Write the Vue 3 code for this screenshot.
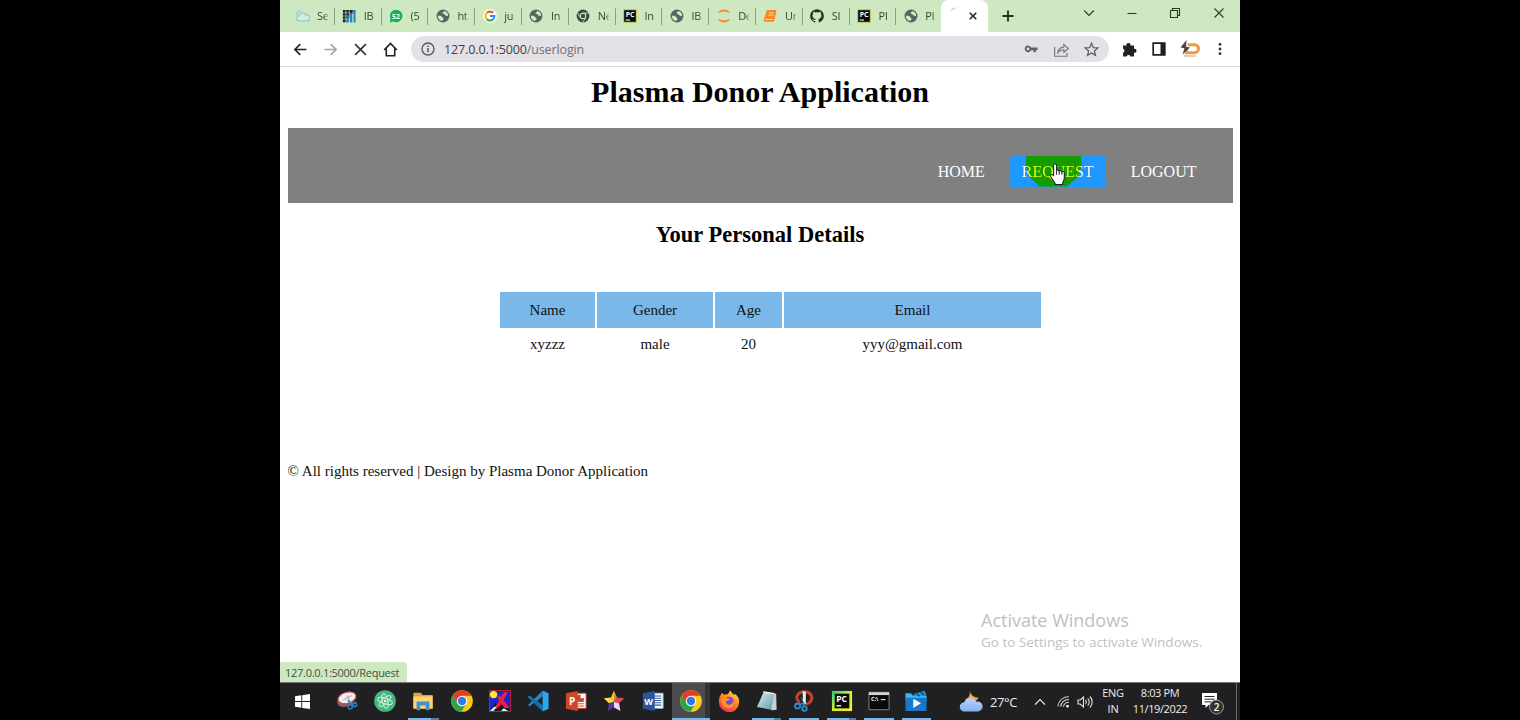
<script setup>
const tabs = [
  { icon: 'cloud', label: 'Se' },
  { icon: 'bars', label: 'IB' },
  { icon: 'chat', label: '(5', mark: '52' },
  { icon: 'globe', label: 'ht' },
  { icon: 'google', label: 'ju' },
  { icon: 'globe', label: 'In' },
  { icon: 'chromedark', label: 'Ne' },
  { icon: 'pc', label: 'In', mark: 'PC' },
  { icon: 'globe', label: 'IB' },
  { icon: 'jupyter', label: 'De' },
  { icon: 'book', label: 'Ur' },
  { icon: 'github', label: 'SI' },
  { icon: 'pc', label: 'Pl', mark: 'PC' },
  { icon: 'globe', label: 'Pl' },
]

const apps = [
  { icon: 'snip' },
  { icon: 'atom' },
  { icon: 'folder', open: true, stacked: true },
  { icon: 'chrome' },
  { icon: 'xming' },
  { icon: 'vscode' },
  { icon: 'powerpoint', mark: 'P' },
  { icon: 'star5' },
  { icon: 'word', mark: 'W' },
  { icon: 'chrome', active: true },
  { icon: 'firefox' },
  { icon: 'notepad', open: true, stacked: true },
  { icon: 'scissors', open: true },
  { icon: 'pycharm', open: true, stacked: true, mark: 'PC' },
  { icon: 'terminal', open: true, mark: 'C:\\' },
  { icon: 'movies', open: true },
]

const columns = ['Name', 'Gender', 'Age', 'Email']
const row = ['xyzzz', 'male', '20', 'yyy@gmail.com']
</script>

<template>
  <div class="stage">
    <svg class="defs" width="0" height="0" aria-hidden="true">
      <defs>
        <linearGradient id="ff" x1="0.8" y1="0" x2="0.3" y2="1">
          <stop offset="0" stop-color="#ffe14a" />
          <stop offset="0.45" stop-color="#ff8a1f" />
          <stop offset="1" stop-color="#f5275b" />
        </linearGradient>
        <linearGradient id="pcg" x1="0" y1="0" x2="1" y2="1">
          <stop offset="0" stop-color="#1fd07a" />
          <stop offset="0.5" stop-color="#d6ee2a" />
          <stop offset="1" stop-color="#f3f32e" />
        </linearGradient>
        <linearGradient id="pad" x1="0" y1="0" x2="1" y2="1">
          <stop offset="0" stop-color="#d9f1f2" />
          <stop offset="1" stop-color="#5f9ba8" />
        </linearGradient>
        <linearGradient id="cl" x1="0" y1="0" x2="0" y2="1">
          <stop offset="0" stop-color="#b9d2fb" />
          <stop offset="1" stop-color="#86aef2" />
        </linearGradient>
      </defs>

      <symbol id="cloud" viewBox="0 0 16 16">
        <path d="M3.500 13.700a3 3 0 0 1-.3-5.900 4.200 4.200 0 0 1 7.900-.9 3.500 3.500 0 1 1 1.200 6.800zM1 7.300A4 4 0 0 1 6.500 2.600" fill="#d2eed8" stroke="#7cc7dd" stroke-width="1.200" />
      </symbol>
      <symbol id="bars" viewBox="0 0 16 16">
        <path d="M1 1h14v4H9v5H5v5H1z" fill="#17242a" />
        <path d="M5 10h3v5.500H5zM9 5.500h3v10H9zM13 1.500h2.500v14H13z" fill="#2488bd" />
        <path d="M4.400 0v16M8.400 0v16M12.500 0v16M0 4.400h9M0 8h9M0 11.600h5" stroke="#cee9c2" stroke-width=".7" />
      </symbol>
      <symbol id="chat" viewBox="0 0 16 16">
        <path d="M8.100.8A7.200 7.200 0 1 1 4.800 14.400L.8 15.400l1.100-4A7.200 7.200 0 0 1 8.100.8z" fill="#17b24a" />
      </symbol>
      <symbol id="globe" viewBox="0 0 16 16">
        <circle cx="8" cy="8" r="7.400" fill="#5a6562" />
        <path d="M2.100 7.700c2.600-.4 4.700.2 5.200 1.700.3 1.100 1.500 1 1.400 2.100 0 1.100-1.500.9-1.900 2.200C3.700 13 2 10.600 2.100 7.700zM9.600 2.300c-.2 1.500-2.200 1-2.200 2.300s2 .8 2.500 1.700c.5.8 1.400 1.700 2.800 1.400l1.200.5C14 5.300 12.300 2.900 9.600 2.300z" fill="#d4ebca" />
      </symbol>
      <symbol id="google" viewBox="0 0 16 16">
        <circle cx="8" cy="8" r="7.800" fill="#fff" />
        <g fill="none" stroke-width="2.400">
          <path d="M4.400 4.400A5 5 0 0 1 11.600 4.400" stroke="#ea4335" />
          <path d="M4.400 11.600a5 5 0 0 1 0-7.200" stroke="#fbbc05" />
          <path d="M11.600 11.600a5 5 0 0 1-7.200 0" stroke="#34a853" />
          <path d="M8 8h5c0 1.600-.5 2.700-1.500 3.700" stroke="#4285f4" />
        </g>
      </symbol>
      <symbol id="chromedark" viewBox="0 0 16 16">
        <circle cx="8" cy="8" r="7.300" fill="#3c4b45" />
        <circle cx="8" cy="8" r="3.100" fill="#3c4b45" stroke="#cee9c2" stroke-width="1.200" />
        <path d="M8 4.600h6.800M5 9.800 1.600 4.300M11 9.800l-3.300 5.500" stroke="#cee9c2" stroke-width="1" />
      </symbol>
      <symbol id="pc" viewBox="0 0 16 16">
        <path d="M.8.8h14.400v14.400H.8z" fill="#0b0b0b" stroke="#c9dc4a" stroke-width="1" />
        <path d="M3 12.600h5" stroke="#fff" stroke-width="1.200" />
      </symbol>
      <symbol id="jupyter" viewBox="0 0 16 16">
        <path d="M.5 5.500C2.500-1 13.500-1 15.500 5.500 11.500 2.500 4.500 2.500.5 5.500zM.5 10.500c2 6.500 13 6.500 15 0-4 3-11 3-15 0z" fill="#f18e3e" />
      </symbol>
      <symbol id="book" viewBox="0 0 16 16">
        <path d="M4.500 1.200h11l-3 13.300H2.500c-1.800 0-2.200-1.500-1.500-3z" fill="#f58a1d" />
        <path d="M6.800 4.500h5.500M6.200 7h5.500" stroke="#ffe6c8" stroke-width="1" />
        <path d="M2.500 12h9" stroke="#ffe6c8" stroke-width=".9" />
      </symbol>
      <symbol id="github" viewBox="0 0 16 16">
        <path d="M8 .3a7.800 7.800 0 0 0-2.500 15.200c.4.100.5-.2.5-.4v-1.400c-2.200.5-2.700-1-2.700-1-.4-.9-.9-1.200-.9-1.200-.7-.5.100-.5.100-.5.800.1 1.200.8 1.200.8.700 1.200 1.900.9 2.300.7.100-.5.300-.9.500-1.100-1.800-.2-3.600-.9-3.600-3.900 0-.9.300-1.600.8-2.100-.1-.2-.4-1 .1-2.100 0 0 .7-.2 2.200.8a7.600 7.600 0 0 1 4 0c1.500-1 2.200-.8 2.200-.8.400 1.100.2 1.900.1 2.100.5.600.8 1.300.8 2.100 0 3-1.900 3.700-3.600 3.900.3.300.5.700.5 1.500v2.200c0 .2.100.5.500.4A7.800 7.800 0 0 0 8 .3z" fill="#26322b" />
      </symbol>

      <symbol id="snip" viewBox="0 0 24 24">
        <ellipse cx="10.500" cy="11.500" rx="9.500" ry="6.500" transform="rotate(-22 10.500 11.500)" fill="#8d5b62" />
        <ellipse cx="12" cy="8.500" rx="10" ry="6" transform="rotate(-16 12 8.500)" fill="#f3eeee" stroke="#c7535b" stroke-width="1.300" />
        <path d="m8 11 9-5M12 6l5 9" stroke="#b8b0b4" stroke-width="1.300" />
        <path d="m13 11 4 5 5-3" fill="none" stroke="#2a7fb8" stroke-width="1.600" />
        <circle cx="15.500" cy="18.500" r="2.200" fill="none" stroke="#2a7fb8" stroke-width="1.600" />
        <circle cx="20.500" cy="16" r="2" fill="none" stroke="#2a7fb8" stroke-width="1.600" />
      </symbol>
      <symbol id="atom" viewBox="0 0 24 24">
        <circle cx="12" cy="12" r="11.800" fill="#45b880" />
        <g fill="none" stroke="#dff5e8" stroke-width="1">
          <ellipse cx="12" cy="12" rx="3" ry="8.300" transform="rotate(-12 12 12)" />
          <ellipse cx="12" cy="12" rx="3" ry="8.300" transform="rotate(48 12 12)" />
          <ellipse cx="12" cy="12" rx="3" ry="8.300" transform="rotate(108 12 12)" />
        </g>
        <circle cx="12" cy="12" r="1.300" fill="#fff" />
      </symbol>
      <symbol id="folder" viewBox="0 0 24 24">
        <path d="M1.500 3h8l2 2.500h11V20h-21z" fill="#d9a441" />
        <path d="M1.500 7h21v13.500h-21z" fill="#fbd274" />
        <path d="M5 12.500h14V22h-4v-5H9v5H5z" fill="#3d94cf" />
      </symbol>
      <symbol id="chrome" viewBox="0 0 24 24">
        <circle cx="12" cy="12" r="11.800" fill="#fbc81c" />
        <path d="M1.800 6.100A11.800 11.800 0 0 1 22.300 6.300H12L7.200 14.800z" fill="#e43b2e" />
        <path d="M1.800 6.100a11.800 11.800 0 0 0 9.500 17.700l5.500-9L12 17.500l-4.800-2.700z" fill="#2ba24c" />
        <circle cx="12" cy="12" r="5.700" fill="#fff" />
        <circle cx="12" cy="12" r="4.600" fill="#3478e5" />
      </symbol>
      <symbol id="xming" viewBox="0 0 24 24">
        <path d="M.5.5h23v23H.5z" fill="#1c22d6" stroke="#c22" stroke-width="1" />
        <circle cx="5" cy="5" r="4" fill="#ffe928" />
        <path d="M1.500 22.500 7 14l4 5 4-5 7.500 6v2.500z" fill="#161616" />
        <path d="M20.500 2.500h-4L12.500 8l-1-2.500L9 8l2.500 3.500L5 20.500h3.500l5-5.500 3.500 4.500h5L16 11z" fill="#ee2130" />
        <path d="m1 23 5-5 2 1-3 4zM13 23l3-3 5 3z" fill="#e9e7ee" />
      </symbol>
      <symbol id="vscode" viewBox="0 0 24 24">
        <path d="M17 .8V7l-6.200 5 6.200 5v6.200L7.500 14 3 17.600 1 16.500 5.500 12 1 7.500l2-1.100L7.500 10z" fill="#2489ca" />
        <path d="M17 .5 23.500 3.500v17l-6.500 3z" fill="#2fa5ec" />
        <path d="m1 7.500 2-1.100L17 17v6.200z" fill="#1070b3" />
      </symbol>
      <symbol id="powerpoint" viewBox="0 0 24 24">
        <path d="M12 3.500h11V20H12z" fill="#fff" stroke="#d04727" />
        <path d="M14 12.500h7M14 15h7M14 17.500h7" stroke="#d04727" />
        <path d="M17 5v4h4a4 4 0 1 1-4-4z" fill="#d04727" />
        <path d="M1 3.500 14 1v22L1 20.500z" fill="#d04727" />
      </symbol>
      <symbol id="star5" viewBox="0 0 24 24">
        <path d="M12 .5 8.700 8.300 12 13z" fill="#ffc928" />
        <path d="m12 .5 3.300 7.800L12 13z" fill="#e08a25" />
        <path d="M.8 9l7.900-.7L12 13l-5.500 1.500z" fill="#ffdb45" />
        <path d="m23.200 9-7.900-.7L12 13l5.500 1.500z" fill="#e8455a" />
        <path d="m6.500 14.500 5.500-1.500v6l-7 4z" fill="#56369b" />
        <path d="M17.500 14.500 12 13v6l7 4z" fill="#e4dced" />
      </symbol>
      <symbol id="word" viewBox="0 0 24 24">
        <path d="M12 3.500h11V20H12z" fill="#fff" stroke="#9cb3d6" />
        <path d="M14 6.500h7M14 9h7M14 11.500h7M14 14h7M14 16.500h7" stroke="#2b579a" stroke-width="1.100" />
        <path d="M1 3.500 14 1v22L1 20.500z" fill="#2b579a" />
      </symbol>
      <symbol id="firefox" viewBox="0 0 24 24">
        <path d="M3 5.500 4 3l2.500 2.200C8 4.400 9.800 4.500 11 5c.3-2 1.500-3.700 3-4.500 0 2.500 2 3 4 5l.5-1.500C22 6.500 23.500 10 23 13.500A11 11 0 0 1 1 13C.8 10.300 1.500 7.500 3 5.500z" fill="url(#ff)" />
        <circle cx="12" cy="12.500" r="5.200" fill="#7544df" />
        <path d="M4 9.500c2-1.500 4.500-1.500 6.500-.5l3 1c-1.500 1.500-3.500 1-4.500 2.500-.8 1.500.5 3.500 3 3.500 3.500 0 4.500-3 4.200-5.500 2.500 3.500.8 9-4.200 9.500C6.500 20.500 3 15 4 9.500z" fill="#ff9320" />
      </symbol>
      <symbol id="notepad" viewBox="0 0 24 24">
        <path d="M8.500 2 22 4l.5 17.500L17 22z" fill="#c9d0d2" />
        <path d="m8.500 2 11.500 2-3.500 17.500L1 18.500z" fill="url(#pad)" />
        <path d="m8 2 12 2" stroke="#f4f8f8" stroke-width="1.500" />
      </symbol>
      <symbol id="scissors" viewBox="0 0 24 24">
        <path d="M7.500 13.500C.5 8 6 2 12.500 2s10 5.500 7 10c-1.600 2.600-4 3.500-6 4" fill="none" stroke="#c5422c" stroke-width="3.200" />
        <path d="m10.500 1 3.500 1v13l-3 1zM13 15 7.500 7l7 8z" fill="#e8edf0" />
        <circle cx="5" cy="17.500" r="2.800" fill="none" stroke="#2d8dce" stroke-width="2" />
        <circle cx="12.500" cy="20.300" r="2.500" fill="none" stroke="#2d8dce" stroke-width="2" />
        <path d="m7.500 16 4-2 .5 4" fill="none" stroke="#2d8dce" stroke-width="1.800" />
      </symbol>
      <symbol id="pycharm" viewBox="0 0 24 24">
        <path d="M1 1h22v22H1z" fill="url(#pcg)" />
        <path d="M4 4h16v16H4z" fill="#0a0a0a" />
        <path d="M6 17.200h5" stroke="#fff" stroke-width="1.500" />
      </symbol>
      <symbol id="terminal" viewBox="0 0 24 24">
        <path d="M1 2.500h22v19H1z" fill="#0a0a0a" stroke="#8b8b8b" />
        <path d="M1 2.500h22v3H1z" fill="#d5d5d5" />
        <path d="M14 10.500h5" stroke="#eee" stroke-width="1.200" />
      </symbol>
      <symbol id="movies" viewBox="0 0 24 24">
        <path d="M10 4 21.500.8 23 5v4H8z" fill="#2292dc" />
        <path d="M.5 3.500h6L9 6.500h14.500V12H.5z" fill="#39b8ea" />
        <path d="m12 4 4 2.500M17 2.500l4 3" stroke="#14578f" stroke-width="1.800" />
        <path d="M.5 8.500h23v13.500a1 1 0 0 1-1 1h-21a1 1 0 0 1-1-1z" fill="#1877cb" />
        <path d="M9 9.500v10l8.500-5z" fill="#fff" />
      </symbol>
    </svg>

    <main class="screen">
      <header class="tabstrip">
        <div v-for="(t, i) in tabs" :key="i" class="tab" :class="{ last: i === tabs.length - 1 }">
          <div class="fav">
            <svg><use :href="'#' + t.icon" /></svg>
            <b v-if="t.mark" class="mark" :class="'on-' + t.icon">{{ t.mark }}</b>
          </div>
          <span class="lbl">{{ t.label }}</span>
        </div>
        <div class="tab current">
          <svg class="spin" viewBox="0 0 14 14"><path d="M2 5c1-2 3-3 5-3" fill="none" stroke="#d7dbf2" stroke-width="1.500" /></svg>
          <svg class="shut" viewBox="0 0 8 8"><path d="m.7.7 6.600 6.600M7.300.7.7 7.300" stroke="#222" stroke-width="1.500" /></svg>
        </div>
        <svg class="plus" viewBox="0 0 12 12"><path d="M6 .5v11M.5 6h11" stroke="#1d3319" stroke-width="1.800" /></svg>
        <div class="winctl">
          <svg width="12" height="12" viewBox="0 0 12 12"><path d="m1.200 3.500 4.800 5 4.800-5" /></svg>
          <svg width="12" height="12" viewBox="0 0 12 12"><path d="M1.500 6.500h9" /></svg>
          <svg width="12" height="12" viewBox="0 0 12 12"><path d="M1.500 3.500h7v7h-7zM3.500 3.500v-2h7v7h-2" /></svg>
          <svg width="12" height="12" viewBox="0 0 12 12"><path d="m1.500 1.500 9 9M10.500 1.500l-9 9" /></svg>
        </div>
      </header>

      <div class="toolbar">
        <svg class="nav" viewBox="0 0 16 16"><path d="M14.300 8H2.500M7.800 2.300 2 8l5.800 5.700" stroke="#222" /></svg>
        <svg class="nav" viewBox="0 0 16 16"><path d="M1.700 8h11.800M8.200 2.300 14 8l-5.800 5.700" stroke="#a4a4a4" /></svg>
        <svg class="nav" viewBox="0 0 16 16"><path d="m2.300 2.300 11.400 11.400M13.700 2.300 2.300 13.700" stroke="#333" /></svg>
        <svg class="nav" viewBox="0 0 16 16"><path d="M1.200 8.500 8 1.500l6.800 7M3.500 7v7.700h9V7" stroke="#222" /></svg>
        <div class="omnibox">
          <svg class="info" viewBox="0 0 14 14"><circle cx="7" cy="7" r="6" fill="none" stroke="#555" stroke-width="1.300" /><path d="M7 6v4.300M7 3.500v1.400" stroke="#555" stroke-width="1.500" /></svg>
          <span class="url">127.0.0.1:5000<span>/userlogin</span></span>
          <svg class="key" viewBox="0 0 14 14"><path d="M4 3.500a3.300 3.300 0 1 0 3 4.800h2.500v1.900h2.300V8.300h1.700V5.500H7A3.300 3.300 0 0 0 4 3.500zm0 2a1.400 1.400 0 1 1 0 2.800 1.400 1.400 0 0 1 0-2.800z" fill="#606063" fill-rule="evenodd" /></svg>
          <svg class="share" viewBox="0 0 14 14"><path d="M.6 4.500v8.800h11.500V10M3.500 10c.4-3.500 2.500-5 5.700-5.200V2.300L13.400 6 9.200 9.600V7.200C6.700 7.200 5 8 3.500 10z" fill="none" stroke="#77777b" stroke-width="1.100" /></svg>
          <svg class="fave" viewBox="0 0 14 14"><path d="m7 1.200 1.700 4 4.300.3-3.300 2.800 1 4.200L7 10.200l-3.700 2.300 1-4.200L1 5.500l4.300-.3z" fill="none" stroke="#606063" stroke-width="1.200" /></svg>
        </div>
        <svg class="ext" viewBox="0 0 14 14"><path d="M1 3.300h3.200a1.900 1.900 0 1 1 3.700 0h3.300v3a1.900 1.900 0 1 1 0 3.700v3.500H7.900a1.900 1.900 0 0 0-3.600 0H1V10a1.900 1.900 0 0 0 0-3.600z" fill="#222" /></svg>
        <svg class="panel" viewBox="0 0 14 14"><path d="M1.200 1.200h11.600v11.600H1.200z" fill="none" stroke="#1f1f1f" stroke-width="1.700" /><path d="M8.500 1h4.500v12H8.500z" fill="#1f1f1f" /></svg>
        <svg class="bolt" viewBox="0 0 20 18"><path d="M7.500 4.700h7a4 4 0 0 1 0 8h-8V9" fill="none" stroke="#f29a3b" stroke-width="3" /><path d="M6.500 0 .5 7.500l4 .8-2 6.200L10 7.500 6 6.700z" fill="#4c4540" /><path d="M4 16h12" stroke="#d2b79a" stroke-width="1.300" /></svg>
        <svg class="dots" viewBox="0 0 4 14"><g fill="#333"><circle cx="2" cy="2.300" r="1.400" /><circle cx="2" cy="7" r="1.400" /><circle cx="2" cy="11.700" r="1.400" /></g></svg>
      </div>

      <section class="page">
        <h1>Plasma Donor Application</h1>
        <nav class="menu">
          <a>HOME</a>
          <a class="hot">
            <i class="halo"></i><span class="lit">REQUEST</span>
            <svg class="hand" viewBox="0 0 16 22"><path d="M4.300 12V2.200a1.400 1.400 0 0 1 2.800 0v5.200c.3-1 2.500-.8 2.600.4.500-.9 2.400-.6 2.500.6.500-.7 2.300-.5 2.300 1v4.900c0 2.200-1.500 3.200-1.700 6.200H6c-.2-2-3-4.500-4.600-7.600-.6-1.300.8-2.400 1.900-1.600z" fill="#fff" stroke="#222" stroke-width="1" /><path d="M7.100 7.500v3.800M9.700 8v3.300M12.200 8.600v2.700" stroke="#222" stroke-width=".9" /></svg>
          </a>
          <a>LOGOUT</a>
        </nav>
        <h2>Your Personal Details</h2>
        <table>
          <thead><tr><td v-for="c in columns" :key="c">{{ c }}</td></tr></thead>
          <tbody><tr><td v-for="c in row" :key="c">{{ c }}</td></tr></tbody>
        </table>
        <p class="rights">© All rights reserved | Design by Plasma Donor Application</p>
        <div class="activate">
          <div class="big">Activate Windows</div>
          <div class="small">Go to Settings to activate Windows.</div>
        </div>
        <div class="status"><span>127.0.0.1:5000/Request</span></div>
      </section>

      <footer class="taskbar">
        <div class="start">
          <svg viewBox="0 0 16 16"><path d="M0 2.300 6.700 1.400v6.100H0zM7.700 1.200 16 0v7.500H7.700zM0 8.500h6.700v6.100L0 13.700zM7.700 8.500H16V16l-8.300-1.200z" fill="#fff" /></svg>
        </div>
        <div v-for="(a, i) in apps" :key="i" class="app" :class="{ open: a.open, active: a.active, stacked: a.stacked }">
          <div class="glyph">
            <svg><use :href="'#' + a.icon" /></svg>
            <b v-if="a.mark" class="mark" :class="'on-' + a.icon">{{ a.mark }}</b>
          </div>
        </div>
        <div class="tray">
          <svg class="weather" viewBox="0 0 24 22"><path d="M10.500.5c1 4 4.500 7.500 9 7-1.500 4.500-9 6.500-13.500 1.500 2.500.2 6-3 4.500-8.500z" fill="#f5ab3c" /><path d="M5.500 21.500a4.600 4.600 0 0 1-.3-9.200 6.500 6.500 0 0 1 12-.6 5 5 0 1 1 1.300 9.800z" fill="url(#cl)" /></svg>
          <span class="temp">27°C</span>
          <svg class="up" viewBox="0 0 12 8"><path d="m1 6.700 5-5.200 5 5.200" fill="none" stroke="#eee" stroke-width="1.200" /></svg>
          <svg class="wifi" viewBox="0 0 14 14"><g fill="none" stroke="#ddd" stroke-width="1.200"><path d="M1 12.500A11.500 11.500 0 0 1 12.800 1.800" opacity=".75" /><path d="M4 12.500a8.500 8.500 0 0 1 8.800-7.700M7 12.500a5.500 5.500 0 0 1 5.800-4.700" /></g><circle cx="11.300" cy="12" r="1.500" fill="#eee" /></svg>
          <svg class="vol" viewBox="0 0 16 14"><path d="M1 5h2.300L6.500 2v10L3.300 9H1zM8.500 5c1 1 1 3 0 4M10.700 3.300c2 2 2 5.400 0 7.400M12.900 1.500c3 3 3 8 0 11" fill="none" stroke="#e2e2e2" stroke-width="1.100" /></svg>
          <div class="duo lang"><span>ENG</span><span>IN</span></div>
          <div class="duo clock"><span>8:03 PM</span><span>11/19/2022</span></div>
          <svg class="note" viewBox="0 0 24 24"><path d="M1 2h15v12H7.500L4.500 17v-3H1z" fill="#fff" /><path d="M3.500 5.500h10M3.500 8.200h10M3.500 10.900h7" stroke="#252525" stroke-width="1" /><circle cx="15.500" cy="16" r="7" fill="#333" stroke="#999" stroke-width="1" /><text x="15.500" y="19.700" text-anchor="middle" font-size="10" fill="#fff" font-weight="600" font-family="Open Sans, sans-serif">2</text></svg>
        </div>
      </footer>
    </main>
  </div>
</template>

<style>
body { background: #000; overflow: hidden; }
</style>

<style scoped>
.stage { width: 1520px; height: 720px; background: #000; display: flex; justify-content: center; }
.defs { position: absolute; }
svg { display: block; flex: none; }
.screen { width: 960px; height: 720px; background: #fff; display: flex; flex-direction: column; font-family: "Open Sans", "Noto Sans", sans-serif; }

.tabstrip { height: 32px; background: #cee9c2; display: flex; align-items: flex-start; padding-left: 8px; box-sizing: border-box; }
.tab { width: 46.800px; height: 32px; box-sizing: border-box; display: flex; align-items: center; padding-left: 7.500px; position: relative; flex: none; }
.tab::after { content: ""; position: absolute; right: 0; top: 8px; width: 1px; height: 17px; background: #8ba184; }
.tab.last::after, .tab.current::after { display: none; }
.fav { position: relative; }
.fav, .fav svg { width: 14px; height: 14px; }
.mark { position: absolute; color: #fff; line-height: 1; text-align: center; white-space: nowrap; }
.on-chat { left: 0; top: 3.500px; width: 14px; font-size: 7px; }
.on-pc { left: 0; top: 1.500px; width: 14px; font-size: 7px; }
.on-powerpoint { left: 1px; top: 6px; width: 12px; font-size: 10px; }
.on-word { left: 1px; top: 6.500px; width: 12px; font-size: 9px; }
.on-pycharm { left: 4px; top: 4.500px; width: 14px; font-size: 8.500px; }
.on-terminal { left: 3px; top: 6.500px; font-size: 5.500px; }
.lbl { margin-left: 7.500px; width: 12px; overflow: hidden; white-space: nowrap; font-size: 11px; line-height: 16px; letter-spacing: -.300px; color: #34482f; -webkit-mask-image: linear-gradient(90deg, #000 65%, transparent); mask-image: linear-gradient(90deg, #000 65%, transparent); }
.tab.current { width: 47px; height: 32px; margin-left: -2px; background: #fff; border-radius: 8px 8px 0 0; padding-left: 8px; }
.spin { width: 14px; height: 14px; margin-top: -6px; }
.shut { width: 8px; height: 8px; margin-left: 6px; }
.plus { width: 12px; height: 12px; margin: 10px 0 0 14px; }
.winctl { display: flex; gap: 31.300px; margin: 7px 15.500px 0 auto; }
.winctl svg { fill: none; stroke: #263d22; stroke-width: 1.100; }

.toolbar { height: 35px; box-sizing: border-box; border-bottom: 1px solid #dcdcdc; display: flex; align-items: center; padding-left: 13px; }
.nav { width: 15px; height: 15px; margin-right: 15px; fill: none; stroke-width: 1.700; }
.nav:nth-of-type(4) { margin-right: 13px; }
.omnibox { width: 698px; height: 26px; border-radius: 13px; background: #e3e1e5; display: flex; align-items: center; }
.info { width: 14px; height: 14px; margin-left: 10px; }
.url { margin-left: 9px; font-size: 12.500px; letter-spacing: -.130px; color: #3e3e40; white-space: nowrap; }
.url span { color: #707073; }
.key { width: 14px; height: 14px; margin-left: auto; }
.share { width: 15px; height: 15px; margin-left: 16px; }
.fave { width: 15px; height: 15px; margin: 0 10px 0 15px; }
.ext { width: 15px; height: 15px; margin-left: 13px; }
.panel { width: 14px; height: 14px; margin-left: 15px; }
.bolt { width: 20px; height: 18px; margin-left: 14px; }
.dots { width: 4px; height: 14px; margin-left: 18px; }

.page { flex: 1; position: relative; padding: 0 7.500px; font-family: "Liberation Serif", serif; color: #111; }
h1 { margin: 7px 0 0; text-align: center; font-size: 30px; line-height: 35px; color: #000; }
.menu { margin-top: 19px; height: 75px; background: #808080; display: flex; justify-content: flex-end; align-items: center; gap: 13px; padding: 11px 24px 0 0; box-sizing: border-box; }
.menu a { position: relative; padding: 0 12px; height: 31px; line-height: 31px; color: #fff; font-size: 16px; border-radius: 2px; white-space: nowrap; }
.menu .hot { background: #1e98ff; }
.halo { position: absolute; left: 16px; top: 0; width: 56px; height: 31px; background: #179c00; clip-path: polygon(1% 0, 98% 0, 100% 32%, 93% 68%, 74% 100%, 25% 100%, 7% 70%, 0 32%); }
.menu .lit { position: relative; color: transparent; background: linear-gradient(90deg, #fff 6px, #e4ff14 6px, #e4ff14 57px, #fff 57px); -webkit-background-clip: text; background-clip: text; }
.hand { position: absolute; left: 39px; top: 7px; width: 17px; height: 23px; }
h2 { margin: 19px 0 0; text-align: center; font-size: 22.500px; line-height: 26px; color: #000; }
table { margin: 42px 0 0 210.500px; width: 545px; border-spacing: 2px; table-layout: fixed; font-size: 15px; text-align: center; }
td { padding: 0; height: 29px; line-height: 17px; }
thead td { height: 36px; background: #79b8e8; }
td:nth-child(1) { width: 95px; }
td:nth-child(2) { width: 116px; }
td:nth-child(3) { width: 67px; }
.rights { margin: 101px 0 0; font-size: 15px; line-height: 18px; }
.activate { position: absolute; left: 701px; top: 541px; font-family: "Open Sans", sans-serif; color: #c1c0c4; white-space: nowrap; }
.big { font-size: 18px; line-height: 24px; }
.small { font-size: 13.500px; line-height: 20px; }
.status { position: absolute; left: 0; bottom: 0; width: 127px; height: 20px; box-sizing: border-box; padding-left: 5px; background: #cee9c2; border-radius: 0 3px 0 0; font: 11px/21px "Open Sans", sans-serif; letter-spacing: -.280px; color: #41513d; white-space: nowrap; }

.taskbar { height: 38px; box-sizing: border-box; border-top: 1px solid #77777a; background: #202022; display: flex; color: #eee; }
.start { width: 44px; margin-right: 4px; display: flex; align-items: center; justify-content: center; }
.start svg { width: 15px; height: 15px; }
.app { width: 38.200px; display: flex; align-items: center; justify-content: center; position: relative; }
.app:nth-child(n+13) { width: 37.400px; }
.glyph { position: relative; margin-top: -1px; }
.glyph, .glyph svg { width: 22px; height: 22px; }
.app.open::after, .app.active::after { content: ""; position: absolute; left: 4px; right: 4px; bottom: 0; height: 2px; background: #76b9ed; }
.app.stacked::after { background: linear-gradient(90deg, #76b9ed 75%, #4f7fa5 75%); }
.app.active { background: linear-gradient(90deg, #4c4c4e 88%, #343436 88%); }
.app.active::after { left: 0; right: 0; }
.tray { margin-left: auto; display: flex; align-items: center; border-right: 1px solid #6c6c6e; margin-right: 3px; }
.weather { width: 24px; height: 22px; margin-top: -2px; }
.temp { width: 28px; margin-left: 7px; font-size: 13px; letter-spacing: -.400px; white-space: nowrap; }
.up { width: 12px; height: 8px; margin-left: 16px; }
.wifi { width: 13px; height: 13px; margin-left: 11px; }
.vol { width: 16px; height: 14px; margin-left: 7px; }
.duo { display: flex; flex-direction: column; align-items: center; justify-content: center; font-size: 11px; line-height: 16px; white-space: nowrap; margin-top: -2px; }
.lang { width: 24px; margin-left: 8px; letter-spacing: -.300px; }
.clock { width: 56px; margin-left: 7px; letter-spacing: -.400px; }
.note { width: 24px; height: 24px; margin: 2px 11px 0 13px; }
</style>
